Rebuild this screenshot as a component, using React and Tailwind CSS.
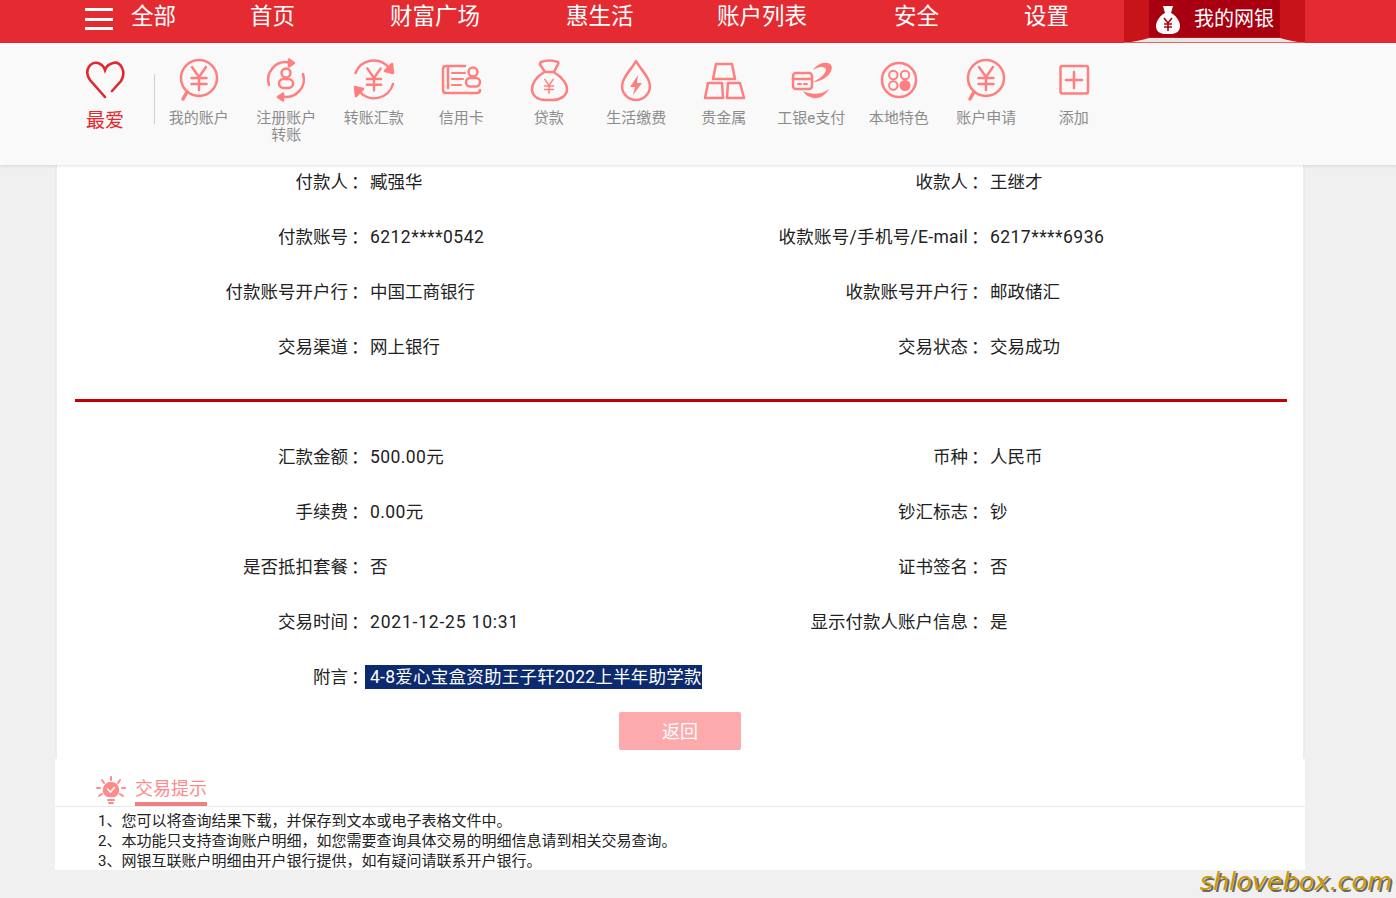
import React from 'react';

const navItems = [
    { label: '全部', ml: 'ml-[18px]' },
    { label: '首页', ml: 'ml-[74px]' },
    { label: '财富广场', ml: 'ml-[95px]' },
    { label: '惠生活', ml: 'ml-[86px]' },
    { label: '账户列表', ml: 'ml-[83.5px]' },
    { label: '安全', ml: 'ml-[87px]' },
    { label: '设置', ml: 'ml-[85px]' },
];

const Yen = ({ cy = 20, s = 1 }) => (
    <g transform={`translate(22 ${cy}) scale(${s})`}>
        <path d="M-7 -11 L0 -1 L7 -11 M-7.5 0 H7.5 M-7.5 6 H7.5 M0 -1 V12" />
    </g>
);

const SearchYen = () => (
    <>
        <circle cx="22" cy="20" r="18" />
        <path d="M10 34 L6 41" strokeWidth="3.5" />
        <Yen />
    </>
);

const iconList = [
    { label: ['我的账户'], icon: <SearchYen /> },
    {
        label: ['注册账户', '转账'],
        icon: (
            <>
                <path d="M5 27 A17.5 17.5 0 0 1 25 4.5" />
                <path d="M25 1.5 L30 5 L25 8.5 Z" fill="#ff7f7f" />
                <path d="M39 16 A17.5 17.5 0 0 1 19 38.5" />
                <path d="M19 35.5 L14 39 L19 42.5 Z" fill="#ff7f7f" />
                <circle cx="22" cy="15" r="4.5" />
                <rect x="15" y="21" width="14" height="9" rx="4.5" />
            </>
        ),
    },
    {
        label: ['转账汇款'],
        icon: (
            <>
                <path d="M3.5 15 A19.5 19.5 0 0 1 37 10" />
                <path d="M33 13 L41 15 L40 6 Z" fill="#ff7f7f" />
                <path d="M41 26 A19.5 19.5 0 0 1 7 33" />
                <path d="M11 31 L3 29 L4 38 Z" fill="#ff7f7f" />
                <Yen cy="21" s="0.95" />
            </>
        ),
    },
    {
        label: ['信用卡'],
        icon: (
            <>
                <path d="M26 8 H7 Q4 8 4 11 V32 Q4 35 7 35 H38 Q41 35 41 32 M9 8 V30" />
                <path d="M13 15 H26 M13 21 H24 M13 27 H22" strokeWidth="2" />
                <circle cx="34" cy="14" r="4.5" />
                <rect x="27" y="20" width="14" height="8.5" rx="4.2" />
            </>
        ),
    },
    {
        label: ['贷款'],
        icon: (
            <>
                <path d="M16 15 C9 19 5 26 5 31 C5 38 11 42 18 42 H26 C33 42 40 38 40 31 C40 26 35 19 28 15" />
                <path d="M14 4 Q22 1 31 4 Q32 6 30 8 L27 14 H18 L14 8 Q12 6 14 4 Z" />
                <Yen cy="28" s="0.6" />
            </>
        ),
    },
    {
        label: ['生活缴费'],
        icon: (
            <>
                <path d="M22 3 C18 11 8 19 8 28 A14 14 0 0 0 36 28 C36 19 26 11 22 3 Z" />
                <path d="M24 17 L16 29 H21 L19 37 L28 25 H23 Z" fill="#ff7f7f" stroke="none" />
            </>
        ),
    },
    {
        label: ['贵金属'],
        icon: (
            <>
                <path d="M14 6 H30 L33 21 H11 Z" />
                <path d="M6 25 H20 L21 40 H3 Z" />
                <path d="M26 25 H38 L42 40 H25 Z" />
            </>
        ),
    },
    {
        label: ['工银e支付'],
        icon: (
            <>
                <rect x="4" y="15" width="19" height="16" rx="3" />
                <path d="M4 21 H23" />
                <path d="M9 26 H12 M15 26 H18" strokeWidth="2" />
                <path d="M24 12 C28 6 36 3 41 6 C45 9 42 16 36 20 C33 22 28 24 24 24 C30 21 36 17 37 12 C37 8 30 8 24 12 Z" fill="#ff7f7f" stroke="none" />
                <path d="M14 33 C22 37 32 37 40 31 C36 38 30 41 24 40 C20 39 16 37 14 33 Z" fill="#ff7f7f" stroke="none" />
            </>
        ),
    },
    {
        label: ['本地特色'],
        icon: (
            <>
                <circle cx="22" cy="22" r="17" />
                <circle cx="16.3" cy="17" r="4.2" strokeWidth="2" />
                <circle cx="28" cy="17" r="4.2" strokeWidth="2" />
                <circle cx="16.3" cy="27.5" r="4.2" strokeWidth="2" />
                <circle cx="28" cy="27.5" r="5.5" fill="#ff7f7f" stroke="none" />
            </>
        ),
    },
    { label: ['账户申请'], icon: <SearchYen /> },
    {
        label: ['添加'],
        icon: (
            <>
                <rect x="8.5" y="8" width="27.5" height="27.5" rx="2" />
                <path d="M14 22 H30 M22 14 V30" />
            </>
        ),
    },
];

const leftRows = [
    [
        { a: '付款人', b: '臧强华', c: '收款人', d: '王继才' },
        { a: '付款账号', b: '6212****0542', c: '收款账号/手机号/E-mail', d: '6217****6936', num: 'tracking-[0.45px]', wide: 'tracking-[0.3px]' },
        { a: '付款账号开户行', b: '中国工商银行', c: '收款账号开户行', d: '邮政储汇' },
        { a: '交易渠道', b: '网上银行', c: '交易状态', d: '交易成功' },
    ],
    [
        { a: '汇款金额', b: '500.00元', c: '币种', d: '人民币', left: 'tracking-[0.4px]' },
        { a: '手续费', b: '0.00元', c: '钞汇标志', d: '钞', left: 'tracking-[0.4px]' },
        { a: '是否抵扣套餐', b: '否', c: '证书签名', d: '否' },
        { a: '交易时间', b: '2021-12-25 10:31', c: '显示付款人账户信息', d: '是', left: 'tracking-[0.8px]' },
    ],
];

const tips = [
    '1、您可以将查询结果下载，并保存到文本或电子表格文件中。',
    '2、本功能只支持查询账户明细，如您需要查询具体交易的明细信息请到相关交易查询。',
    '3、网银互联账户明细由开户银行提供，如有疑问请联系开户银行。',
];

// the colon glyph sits a little further right than the label box
const Colon = () => <span className="inline-block w-[19px] pl-[3px] text-left">：</span>;

const DetailRows = ({ rows, children }) => (
    <div className="grid grid-cols-[310px_310px_310px_1fr] gap-y-[23px] text-[17.5px] leading-[32px] text-[#222]">
        {rows.map((row) => (
            <React.Fragment key={row.a}>
                <div className="text-right">{row.a}<Colon /></div>
                <div className={`pl-[3px] ${row.num || row.left || ''}`}>{row.b}</div>
                <div className={`text-right ${row.wide || ''}`}>{row.c}<Colon /></div>
                <div className={`pl-[3px] ${row.num || ''}`}>{row.d}</div>
            </React.Fragment>
        ))}
        {children}
    </div>
);

export default function App() {
    return (
        <div className="relative h-[898px] w-[1396px] overflow-hidden bg-[#f0f0f0] font-['Roboto','Noto_Sans_CJK_SC',sans-serif]">
            {/* top red nav */}
            <div className="relative z-10 flex h-[43px] items-start bg-[#e42b31] pl-[85px] text-white">
                <div className="mt-[8px] flex h-[22px] w-[28px] flex-col justify-between">
                    <span className="h-[3px] bg-white" />
                    <span className="h-[3px] bg-white" />
                    <span className="h-[3px] bg-white" />
                </div>
                {navItems.map((item) => (
                    <div key={item.label} className={`${item.ml} text-[22.5px] leading-[33px]`}>{item.label}</div>
                ))}
                <div className="ml-[55px] flex h-[43px] w-[181px] flex-col">
                    <div className="h-[37px] bg-[#c81418] pl-[25px]">
                        <div className="flex h-[37px] w-[131px] items-center bg-[#a80010] pl-[6px]">
                            <svg width="26" height="30" viewBox="0 0 26 30" className="mt-[3px]">
                                <path d="M8 1 H18 L16 8 C22 11 25 17 25 21 C25 27 20 29 16 29 H10 C6 29 1 27 1 21 C1 17 4 11 10 8 Z" fill="#fff" />
                                <path d="M9 13 L13 18 L17 13 M9 19 H17 M9 22 H17 M13 18 V26" stroke="#a80010" strokeWidth="1.6" fill="none" />
                            </svg>
                            <span className="ml-[13px] text-[20px] leading-[28px]">我的网银</span>
                        </div>
                    </div>
                    <svg width="181" height="6" viewBox="0 0 181 6" className="block">
                        <rect width="181" height="6" fill="#c81418" />
                        <path d="M0 6 Q15 4 25 1 H156 Q166 4 181 6 Z" fill="#ebe6e6" />
                        <rect y="5" width="181" height="1" fill="#f06065" />
                    </svg>
                </div>
            </div>

            {/* icon shortcuts */}
            <div className="relative z-10 flex h-[122px] bg-[#f9f9f9] pl-[83px] shadow-[0_1px_3px_rgba(0,0,0,0.12)]">
                <div className="flex w-[44px] flex-col items-center pt-[15px]">
                    <svg width="44" height="44" viewBox="0 0 44 44" fill="none" stroke="#e0282e" strokeWidth="2.6" strokeLinecap="round">
                        <path d="M22 39 L7 22 C0 12 8 3 15 5 C18 6 21 9 22 12 C23 9 26 6 30 5 C37 3 44 13 38 23 L29 33" />
                    </svg>
                    <div className="mt-[5px] text-[19px] leading-[28px] whitespace-nowrap text-[#e8262c]">最爱</div>
                </div>
                <div className="mt-[31px] ml-[27px] h-[50px] w-px bg-[#cfcfcf]" />
                <div className="flex">
                    {iconList.map((item, i) => (
                        <div key={i} className="flex w-[87.5px] flex-col items-center pt-[15px]">
                            <svg width="44" height="44" viewBox="0 0 44 44" fill="none" stroke="#ff7f7f" strokeWidth="2.5" strokeLinecap="round" strokeLinejoin="round">
                                {item.icon}
                            </svg>
                            <div className="mt-[8px] text-center text-[15px] leading-[17px] text-[#8c8c8c]">
                                {item.label.map((line) => <div key={line}>{line}</div>)}
                            </div>
                        </div>
                    ))}
                </div>
            </div>

            {/* detail card */}
            <div className="ml-[55px] h-[594px] w-[1250px] border-x-2 border-[#ececec] bg-white pt-px">
                <DetailRows rows={leftRows[0]} />
                <div className="mt-[36px] mr-[16px] ml-[18px] h-[3px] bg-[#c00000]" />
                <div className="mt-[39px]">
                    <DetailRows rows={leftRows[1]}>
                        <div className="text-right">附言<Colon /></div>
                        <div className="col-span-3 pl-[3px]">
                            <span className="ml-[-5px] inline-block h-[24px] bg-[#0c2a6e] pl-[5px] leading-[24px] tracking-[0.25px] text-white">4-8爱心宝盒资助王子轩2022上半年助学款</span>
                        </div>
                    </DetailRows>
                </div>
                <div className="mt-[19px] flex justify-center">
                    <button className="h-[38px] w-[122px] rounded-[2px] bg-[#fdaaac] text-[18px] text-white">返回</button>
                </div>
            </div>

            {/* tips */}
            <div className="ml-[55px] h-[111px] w-[1250px] overflow-hidden bg-white">
                <div className="flex h-[48px] items-end border-b border-[#e8e8e8] pl-[41px]">
                    <svg width="30" height="30" viewBox="0 0 30 30" fill="none" stroke="#ff8a8a" strokeWidth="2" strokeLinecap="round">
                        <path d="M15 1 V4 M6 4 L8 7 M24 4 L22 7 M1 12 H4 M26 12 H29 M3 20 L6 18 M27 20 L24 18" />
                        <path d="M15 6 A8 8 0 0 0 11 21 H19 A8 8 0 0 0 15 6 Z" fill="#ff8a8a" stroke="none" />
                        <path d="M11.5 13 L14.5 16 L18.5 11.5" stroke="#fff" strokeWidth="1.6" />
                        <path d="M12 24 H18 M13 27 H17" />
                    </svg>
                    <div className="ml-[9px] h-[29px] w-[72px] border-b-4 border-[#f08080] text-[18px] leading-[24px] text-[#ff8a8a]">交易提示</div>
                </div>
                <div className="pt-[4px] pl-[43px] text-[15px] leading-[20px] text-[#222]">
                    {tips.map((t) => <div key={t}>{t}</div>)}
                </div>
            </div>

            {/* watermark */}
            <div className="absolute right-[4px] bottom-[0px] font-['DejaVu_Sans',sans-serif] text-[25.5px] leading-[34px] italic text-[#c99a0c] [text-shadow:2px_2px_0_#666]">shlovebox.com</div>
        </div>
    );
}
